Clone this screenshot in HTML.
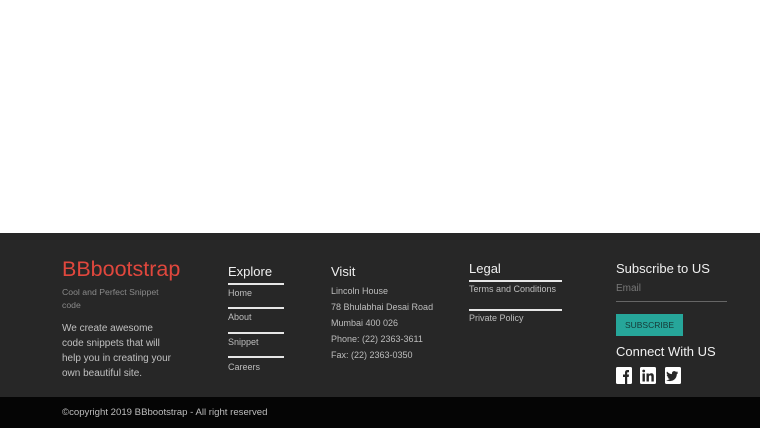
<!DOCTYPE html>
<html><head><style>
*{margin:0;padding:0;box-sizing:border-box}
body{width:760px;height:428px;background:#fff;font-family:"Liberation Sans",Arial,sans-serif;position:relative;overflow:hidden}
.f{position:absolute;left:0;top:233px;width:760px;height:164px;background:#272727}
.b{position:absolute;left:0;top:397px;width:760px;height:31px;background:#050505}
.a{position:absolute;white-space:nowrap}
.h{color:#f0f0f0;font-size:13px}
.s{color:#bdbdbd;font-size:9px}
.l{position:absolute;height:2px;background:#e6e6e6}
</style></head><body>
<div class="f"></div><div class="b"></div>
<div class="a" style="left:62px;top:257px;font-size:21.5px;color:#e0473d">BBbootstrap</div>
<div class="a" style="left:62px;top:286px;font-size:8.7px;color:#8a8a8a;line-height:13px;white-space:normal;width:110px">Cool and Perfect Snippet code</div>
<div class="a" style="left:62px;top:321px;font-size:10px;color:#c0c0c0;line-height:15px;white-space:normal;width:112px">We create awesome code snippets that will help you in creating your own beautiful site.</div>
<div class="a h" style="left:228px;top:264px">Explore</div>
<div class="l" style="left:228px;top:283px;width:56px"></div>
<div class="a s" style="left:228px;top:288px">Home</div>
<div class="l" style="left:228px;top:307px;width:56px"></div>
<div class="a s" style="left:228px;top:312px">About</div>
<div class="l" style="left:228px;top:332px;width:56px"></div>
<div class="a s" style="left:228px;top:337px">Snippet</div>
<div class="l" style="left:228px;top:356px;width:56px"></div>
<div class="a s" style="left:228px;top:362px">Careers</div>
<div class="a h" style="left:331px;top:264px">Visit</div>
<div class="a s" style="left:331px;top:283px;line-height:16.1px">Lincoln House<br>78 Bhulabhai Desai Road<br>Mumbai 400 026<br>Phone: (22) 2363-3611<br>Fax: (22) 2363-0350</div>
<div class="a h" style="left:469px;top:261px">Legal</div>
<div class="l" style="left:469px;top:280px;width:93px"></div>
<div class="a s" style="left:469px;top:284px">Terms and Conditions</div>
<div class="l" style="left:469px;top:309px;width:93px"></div>
<div class="a s" style="left:469px;top:313px">Private Policy</div>
<div class="a h" style="left:616px;top:261px">Subscribe to US</div>
<div class="a" style="left:616px;top:283px;font-size:10px;color:#777">Email</div>
<div class="l" style="left:616px;top:301px;width:111px;height:1px;background:#666"></div>
<div class="a" style="left:616px;top:314px;width:67px;height:22px;background:#26a69a;color:#163a37;font-size:8.5px;text-align:center;line-height:22px">SUBSCRIBE</div>
<div class="a h" style="left:616px;top:344px">Connect With US</div>
<svg class="a" style="left:616px;top:367px" width="70" height="18" viewBox="0 0 70 18">
<rect x="0" y="0" width="16" height="17" rx="1.5" fill="#fff"/><path d="M9 17V10H7V7.5H9V5.5C9 3.8 10 3 11.5 3H13V5.3H12C11.3 5.3 11.2 5.6 11.2 6.2V7.5H13L12.7 10H11.2V17Z" fill="#272727"/>
<rect x="24" y="0" width="16" height="17" rx="1.5" fill="#fff"/><rect x="26.5" y="6.5" width="2.4" height="8" fill="#272727"/><circle cx="27.7" cy="4" r="1.4" fill="#272727"/><path d="M30.5 6.5H32.8V7.6C33.3 6.8 34.2 6.3 35.3 6.3C37.3 6.3 37.8 7.6 37.8 9.4V14.5H35.4V10C35.4 9 35.1 8.4 34.2 8.4C33.3 8.4 32.9 9.1 32.9 10V14.5H30.5Z" fill="#272727"/>
<rect x="49" y="0" width="16" height="17" rx="1.5" fill="#fff"/><path d="M62 5.2C61.5 5.4 61 5.6 60.5 5.6C61 5.3 61.4 4.8 61.6 4.3C61.1 4.6 60.5 4.8 60 4.9C59 3.8 57.2 3.9 56.3 5.1C55.9 5.7 55.8 6.4 56 7.1C54 7 52.2 6 51 4.5C50.3 5.7 50.7 7.2 51.8 7.9C51.4 7.9 51 7.8 50.7 7.6C50.7 8.8 51.6 9.9 52.8 10.1C52.4 10.2 52 10.2 51.6 10.2C51.9 11.2 52.9 11.9 54 11.9C52.9 12.8 51.5 13.2 50.2 13C54.6 15.8 60.7 13 60.8 7.3C61.3 6.9 61.7 6.5 62 6Z" fill="#272727"/>
</svg>
<div class="a" style="left:62px;top:407px;font-size:9.6px;color:#bdbdbd">©copyright 2019 BBbootstrap - All right reserved</div>
</body></html>
